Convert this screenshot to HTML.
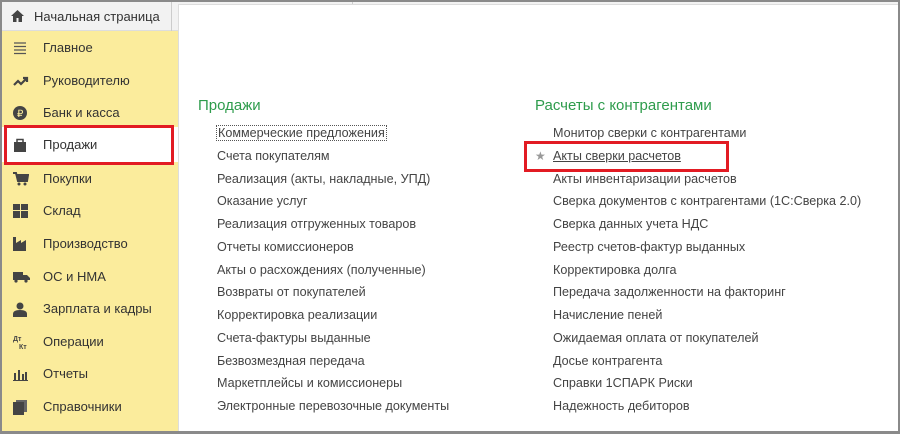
<!DOCTYPE html>
<html><head><meta charset="utf-8"><style>
*{margin:0;padding:0;box-sizing:border-box}
body{width:900px;height:434px;overflow:hidden;background:#fff;font-family:"Liberation Sans",sans-serif;position:relative}
.frame{position:absolute;left:0;top:0;width:900px;height:434px;border:2px solid #8a8a8a;border-bottom-width:3px}
.top{position:absolute;left:2px;top:2px;width:896px;height:29px;background:#f2f2f2;border-bottom:1px solid #ddd}
.tab{position:absolute;left:0;top:0;width:170px;height:29px;border-right:1px solid #ccc;font-size:13px;color:#333;line-height:29px;padding-left:32px}
.side{position:absolute;left:2px;top:31px;width:176px;height:400px;background:#fbec9c}
.si{position:absolute;left:0;width:176px;height:33px;font-size:13px;color:#333;line-height:33px;padding-left:41px}
.si svg{position:absolute;left:11px;top:10px}
.sel{background:#fff}
.main{position:absolute;left:178px;top:4px;width:720px;height:427px;background:#fff;border-left:1px solid #ddd;border-top:1px solid #ddd}
.h{position:absolute;font-size:15px;color:#2e9c4c}
.list{position:absolute;font-size:12.6px;color:#444;line-height:22.75px}
.red{position:absolute;border:3px solid #e21b23}
</style></head><body>
<div class="top"><div class="tab"><svg style="position:absolute;left:9px;top:8px" width="13" height="12" viewBox="0 0 13 12"><path d="M6.5 0L0 6h2v6h3.5V8h2v4H11V6h2z" fill="#444"/></svg>Начальная страница</div>
<div style="position:absolute;left:350px;top:0;height:6px;border-left:1px solid #ccc"></div></div>
<div class="side">
<div class="si" style="top:0"><svg width="14" height="14"><path d="M1 2h12M1 5.5h12M1 9h12M1 12.5h12" stroke="#555" stroke-width="1.3"/></svg>Главное</div>
<div class="si" style="top:33px"><svg width="16" height="14"><path d="M1 11l4-4 3 3 6-6M10 4h4v4" stroke="#444" stroke-width="2.2" fill="none"/></svg>Руководителю</div>
<div class="si" style="top:65px"><svg width="14" height="14"><circle cx="7" cy="7" r="7" fill="#444"/><text x="4" y="11" font-size="10" fill="#fbec9c" font-family="Liberation Sans">₽</text></svg>Банк и касса</div>
<div class="si sel" style="top:96px;height:35px;line-height:35px"><svg width="14" height="15"><path d="M4 5V2.5h6V5" stroke="#444" stroke-width="1.5" fill="none"/><rect x="1" y="5" width="12" height="10" fill="#444"/></svg>Продажи</div>
<div class="si" style="top:131px"><svg width="16" height="14"><path d="M0 1h3l2 8h9l1-6H4" stroke="#444" stroke-width="2" fill="#444"/><circle cx="6" cy="12" r="1.5" fill="#444"/><circle cx="12" cy="12" r="1.5" fill="#444"/></svg>Покупки</div>
<div class="si" style="top:163px"><svg width="15" height="14"><path d="M0 0h7v6H0zM8 0h7v6H8zM0 7h7v7H0zM8 7h7v7H8z" fill="#444"/></svg>Склад</div>
<div class="si" style="top:196px"><svg width="15" height="14"><path d="M0 14V0h3v6l5-3v3l5-3v11z" fill="#444"/></svg>Производство</div>
<div class="si" style="top:229px"><svg width="17" height="13"><path d="M0 2h10v8H0zM10 5h4l3 3v2h-7z" fill="#444"/><circle cx="3" cy="11" r="1.6" fill="#444"/><circle cx="13" cy="11" r="1.6" fill="#444"/></svg>ОС и НМА</div>
<div class="si" style="top:261px"><svg width="14" height="15"><circle cx="7" cy="4" r="3.5" fill="#444"/><path d="M0 15v-3q0-4 7-4t7 4v3z" fill="#444"/></svg>Зарплата и кадры</div>
<div class="si" style="top:294px"><svg width="16" height="15"><text x="0" y="6" font-size="7" fill="#444" font-family="Liberation Sans" font-weight="bold">Дт</text><text x="6" y="14" font-size="7" fill="#444" font-family="Liberation Sans" font-weight="bold">Кт</text></svg>Операции</div>
<div class="si" style="top:326px"><svg width="15" height="14"><path d="M1 6h2v7H1zM5 3h2v10H5zM9 7h2v6H9zM12 5h2v8h-2zM0 13h15v1H0z" fill="#444"/></svg>Отчеты</div>
<div class="si" style="top:359px"><svg width="14" height="15"><path d="M3 0h11v12H3z" fill="#666"/><path d="M0 2h11v13H0z" fill="#444"/></svg>Справочники</div>
</div>
<div class="main"></div>
<div class="h" style="left:198px;top:97px">Продажи</div>
<div class="list" style="left:217px;top:122px">
<div><span style="outline:1px dotted #555;padding:0 1px">Коммерческие предложения</span></div>
<div>Счета покупателям</div><div>Реализация (акты, накладные, УПД)</div><div>Оказание услуг</div><div>Реализация отгруженных товаров</div><div>Отчеты комиссионеров</div><div>Акты о расхождениях (полученные)</div><div>Возвраты от покупателей</div><div>Корректировка реализации</div><div>Счета-фактуры выданные</div><div>Безвозмездная передача</div><div>Маркетплейсы и комиссионеры</div><div>Электронные перевозочные документы</div>
</div>
<div class="h" style="left:535px;top:97px">Расчеты с контрагентами</div>
<div class="list" style="left:553px;top:122px">
<div>Монитор сверки с контрагентами</div>
<div style="position:relative"><span style="position:absolute;left:-18px;color:#999;font-size:12px">★</span><u>Акты сверки расчетов</u></div>
<div>Акты инвентаризации расчетов</div><div>Сверка документов с контрагентами (1С:Сверка 2.0)</div><div>Сверка данных учета НДС</div><div>Реестр счетов-фактур выданных</div><div>Корректировка долга</div><div>Передача задолженности на факторинг</div><div>Начисление пеней</div><div>Ожидаемая оплата от покупателей</div><div>Досье контрагента</div><div>Справки 1СПАРК Риски</div><div>Надежность дебиторов</div>
</div>
<div class="red" style="left:4px;top:125px;width:170px;height:40px"></div>
<div class="red" style="left:524px;top:141px;width:205px;height:31px"></div>
<div class="frame"></div>
</body></html>
